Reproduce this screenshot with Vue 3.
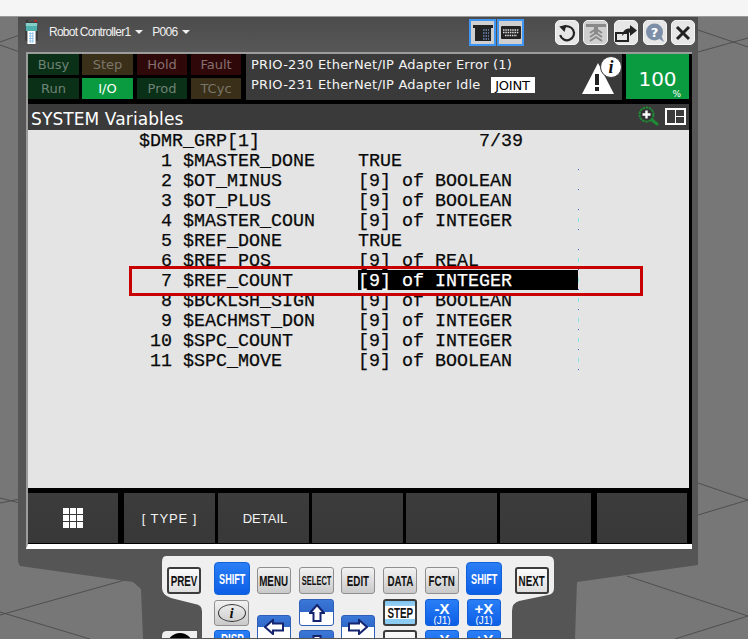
<script setup>
const status = [
  { t: 'Busy', c: 'g' }, { t: 'Step', c: 'y' }, { t: 'Hold', c: 'r' }, { t: 'Fault', c: 'r' },
  { t: 'Run', c: 'g' }, { t: 'I/O', c: 'on' }, { t: 'Prod', c: 'g' }, { t: 'TCyc', c: 'y' },
]
const rows = [
  { n: 1, name: '$MASTER_DONE', v: 'TRUE', dot: 'b' },
  { n: 2, name: '$OT_MINUS', v: '[9] of BOOLEAN', dot: 'b' },
  { n: 3, name: '$OT_PLUS', v: '[9] of BOOLEAN', dot: 'b' },
  { n: 4, name: '$MASTER_COUN', v: '[9] of INTEGER', dot: 'c' },
  { n: 5, name: '$REF_DONE', v: 'TRUE', dot: 'b' },
  { n: 6, name: '$REF_POS', v: '[9] of REAL', dot: 'c' },
  { n: 7, name: '$REF_COUNT', v: '[9] of INTEGER', dot: 'c', sel: true },
  { n: 8, name: '$BCKLSH_SIGN', v: '[9] of BOOLEAN', dot: 'c' },
  { n: 9, name: '$EACHMST_DON', v: '[9] of INTEGER', dot: 'c' },
  { n: 10, name: '$SPC_COUNT', v: '[9] of INTEGER', dot: 'c' },
  { n: 11, name: '$SPC_MOVE', v: '[9] of BOOLEAN', dot: 'c' },
]
const softKeys = ['', '[ TYPE ]', 'DETAIL', '', '', '', '']
const topKeys = [
  { t: 'MENU', c: 'col3' }, { t: 'SELECT', c: 'col4 small' }, { t: 'EDIT', c: 'col5' },
  { t: 'DATA', c: 'col6' }, { t: 'FCTN', c: 'col7' },
]
</script>

<template>
  <div class="page">
    <div class="topband"></div>
    <svg class="scene" width="748" height="639" viewBox="0 0 748 639">
      <g stroke="#4f4f4f" stroke-width="1" fill="none">
        <path d="M0 42L20 35M0 45L20 52M698 30L748 47M698 52L748 38M0 498L20 503M0 503L20 499M698 483L748 500M698 515L748 500M0 615L125 580M0 612L90 639M627 576L748 616M675 639L748 616" />
      </g>
    </svg>

    <div class="shell">
      <header class="head">
        <svg class="handset" width="13" height="25" viewBox="0 0 16 25" preserveAspectRatio="none">
          <circle cx="2.500" cy="2" r="1.600" fill="#3a3a3a" />
          <circle cx="13" cy="2" r="1.600" fill="#c0261c" />
          <rect x="0" y="3" width="16" height="19" rx="2" fill="#3c3c3c" />
          <rect x="1" y="4" width="14" height="8" fill="#4fb0ad" />
          <rect x="1" y="4" width="14" height="3" fill="#86cfc9" />
          <rect x="3" y="12" width="10" height="13" fill="#fff" />
          <path d="M5 14.500h6M5 17h6M5 19.500h6M5 22h6M6.500 13v11M9.500 13v11" stroke="#8fc4ea" stroke-width="1" />
        </svg>
        <span class="crumb first">Robot Controller1</span>
        <i class="caret"></i>
        <span class="crumb">P006</span>
        <i class="caret last"></i>
        <div class="spacer"></div>
        <button class="mode">
          <svg width="20" height="18" viewBox="0 0 20 18">
            <path d="M0 1h20v3h-2v13H2V4H0z" fill="#222" />
            <path d="M10 6h6M10 9h6M10 12h6M10 15h6" stroke="#6d89b5" stroke-width="1.500" stroke-dasharray="1.500 1" />
          </svg>
        </button>
        <button class="mode">
          <svg width="20" height="14" viewBox="0 0 20 14">
            <rect width="20" height="13" rx="1" fill="#222" />
            <path d="M2 4h16M2 6.500h16M4 9.500h12" stroke="#ddd" stroke-width="1.300" stroke-dasharray="1.500 .8" />
          </svg>
        </button>
        <button class="tool t1">
          <svg width="20" height="20" viewBox="0 0 20 20">
            <path d="M6 4.500A7 7 0 1 1 3.200 12" fill="none" stroke="#222" stroke-width="2.200" />
            <path d="M8.500 8.500V1L2 4.500z" fill="#222" transform="rotate(15 6 5)" />
          </svg>
        </button>
        <button class="tool t2">
          <svg width="20" height="22" viewBox="0 0 20 22">
            <path d="M0 2h20v3H0zM8 2h4v9H8z" fill="#8a8a8a" />
            <path d="M4 11l6-4 6 4M4 15l6-4 6 4M4 19l6-4 6 4" fill="none" stroke="#8a8a8a" stroke-width="2" />
          </svg>
        </button>
        <button class="tool t3">
          <svg width="22" height="20" viewBox="0 0 22 20">
            <path d="M1 10h12v8H1z" fill="none" stroke="#222" stroke-width="2" />
            <path d="M7 13C8 7 11 5.500 15 5.500V2l7 5.500-7 5.500V9.500C11 9.500 9 10.500 7 13z" fill="#222" />
          </svg>
        </button>
        <button class="tool t4">
          <svg width="20" height="20" viewBox="0 0 20 20">
            <circle cx="9.500" cy="9" r="8.500" fill="#7d8fa8" />
            <path d="M13 15l6 4-3-7z" fill="#7d8fa8" />
            <text x="9.500" y="14" text-anchor="middle" class="q">?</text>
          </svg>
        </button>
        <button class="tool t5">
          <svg width="18" height="18" viewBox="0 0 18 18">
            <path d="M3 3l12 12M15 3L3 15" stroke="#222" stroke-width="3" />
          </svg>
        </button>
      </header>

      <section class="screen">
        <div class="statusbar">
          <div class="lamps">
            <span v-for="s in status" :key="s.t" class="lamp" :class="s.c">{{ s.t }}</span>
          </div>
          <div class="msg">
            <div class="lines">
              <div>PRIO-230 EtherNet/IP Adapter Error (1)</div>
              <div>PRIO-231 EtherNet/IP Adapter Idle<span class="joint">JOINT</span></div>
            </div>
            <div class="alert">
              <svg width="34" height="31" viewBox="0 0 34 31">
                <path d="M17 0L33 31H1z" fill="#fff" />
                <rect x="14" y="11" width="4" height="11" fill="#222" />
                <rect x="14" y="24" width="4" height="4" fill="#222" />
              </svg>
              <span class="info">i</span>
            </div>
          </div>
          <div class="speed"><span class="num">100</span><span class="pct">%</span></div>
        </div>

        <div class="titlebar">
          <span class="title">SYSTEM Variables</span>
          <svg class="zoomi" width="21" height="20" viewBox="0 0 21 20">
            <circle cx="8.500" cy="8.500" r="7" fill="#333" stroke="#1f8a35" stroke-width="2" stroke-dasharray="2.500 .7" />
            <path d="M8.500 4.500v8M4.500 8.500h8" stroke="#fff" stroke-width="2.400" />
            <path d="M14 14l5 4" stroke="#1f8a35" stroke-width="3" stroke-linecap="round" />
          </svg>
          <span class="split"><i></i><i></i><i></i></span>
        </div>

        <div class="content">
          <div class="heading"><span>$DMR_GRP[1]</span><span class="pos">7/39</span></div>
          <div v-for="r in rows" :key="r.n" class="row">
            <span class="idx">{{ r.n }}</span>
            <span class="name">{{ r.name }}</span>
            <span class="val" :class="{ sel: r.sel }">{{ r.v }}</span>
            <i class="tick" :class="r.dot"></i>
          </div>
          <div class="redbox"></div>
        </div>

        <div class="softkeys">
          <div v-for="(k, i) in softKeys" :key="i" class="soft">
            <span v-if="i === 0" class="dots"><i v-for="d in 9" :key="d"></i></span>
            <span v-else>{{ k }}</span>
          </div>
        </div>
      </section>

      <section class="keypad">
        <button class="key white col1 r1"><span class="sq">PREV</span></button>
        <button class="key blue shift col2"><span class="sq">SHIFT</span></button>
        <button v-for="k in topKeys" :key="k.t" class="key gray r1" :class="k.c"><span class="sq">{{ k.t }}</span></button>
        <button class="key blue shift col8 shiftr"><span class="sq">SHIFT</span></button>
        <button class="key white col9 r1"><span class="sq">NEXT</span></button>

        <button class="key gray col2 r2 infokey"><span class="ring">i</span></button>
        <button class="key arrow col4 r2">
          <svg width="16" height="18" viewBox="0 0 16 18"><path d="M8 1l7 8h-3.500v8h-7V9H1z" fill="#fff" stroke="#14246e" stroke-width="2" /></svg>
        </button>
        <button class="key step col6 r2"><span class="sq">STEP</span></button>
        <button class="key blue jog col7 r2"><b>-X</b><small>(J1)</small></button>
        <button class="key blue jog col8 r2"><b>+X</b><small>(J1)</small></button>

        <button class="key arrow side col3 r3">
          <svg width="20" height="16" viewBox="0 0 20 16"><path d="M1 8l8-7v3.500h10v7H9V15z" fill="#fff" stroke="#14246e" stroke-width="2" /></svg>
        </button>
        <button class="key arrow side col5 r3">
          <svg width="20" height="16" viewBox="0 0 20 16"><path d="M19 8l-8-7v3.500H1v7h10V15z" fill="#fff" stroke="#14246e" stroke-width="2" /></svg>
        </button>

        <div class="estop"></div>
        <button class="key blue col2 r4 disp"><span class="sq">DISP</span></button>
        <button class="key arrow col4 r4">
          <svg width="16" height="18" viewBox="0 0 16 18"><path d="M8 17l7-8h-3.500V1h-7v8H1z" fill="#fff" stroke="#14246e" stroke-width="2" /></svg>
        </button>
        <button class="key white col6 r4"></button>
        <button class="key blue jog col7 r4"><b>-Y</b><small>(J2)</small></button>
        <button class="key blue jog col8 r4"><b>+Y</b><small>(J2)</small></button>
      </section>
    </div>
  </div>
</template>

<style scoped>
.page {
  position: relative;
  width: 748px;
  height: 639px;
  overflow: hidden;
  background: #777;
  font-family: "DejaVu Sans", sans-serif;
}
.topband {
  height: 16px;
  background: #f5f5f5;
  border-bottom: 1px solid #9a9a9a;
}
.scene {
  position: absolute;
  left: 0;
  top: 0;
}
.shell {
  position: relative;
  width: 680px;
  height: 622px;
  margin-left: 18px;
  background: linear-gradient(#4c4c4c, #575757 35px, #555);
  clip-path: polygon(0 0, 680px 0, 680px 548px, 559px 565px, 557px 622px, 125px 622px, 123px 572px, 115px 565px, 2px 549px, 0 545px);
}
.head {
  height: 35px;
  display: flex;
  align-items: flex-start;
  padding-left: 7px;
}
.handset { margin-top: 2px; }
.crumb {
  font: 12px/14px "Liberation Sans", sans-serif;
  color: #f0f0f0;
  margin-top: 8px;
  letter-spacing: -.75px;
}
.crumb.first { margin-left: 11px; }
.caret {
  width: 0;
  height: 0;
  margin: 13px 9px 0 5px;
  border-left: 4px solid transparent;
  border-right: 4px solid transparent;
  border-top: 4px solid #f0f0f0;
}
.caret.last { margin-left: 5px; }
.spacer { flex: 1; }
.mode, .tool {
  padding: 0;
  display: flex;
  align-items: center;
  justify-content: center;
  cursor: default;
}
.mode {
  width: 27px;
  height: 27px;
  margin-top: 2px;
  border: 2px solid #3e97f5;
  background: #cfcfcf;
}
.mode + .mode { margin-left: 1px; }
.tool {
  height: 25px;
  width: 24px;
  margin-top: 3px;
  border: 1px solid #f5f5f5;
  border-radius: 5px;
  background: #e6e6e6;
}
.t1 { margin-left: 31px; }
.t2 { margin-left: 4px; width: 25px; background: #cfcfcf; }
.t3 { margin-left: 6px; }
.t4 { margin-left: 5px; }
.t5 { margin-left: 4px; margin-right: 3px; }
.q { font: bold 13px "DejaVu Sans", sans-serif; fill: #fff; }

.screen {
  width: 666px;
  height: 497px;
  margin-left: 8px;
  box-sizing: border-box;
  border-top: 2px solid #9c9c9c;
  border-left: 2px solid #9c9c9c;
  border-bottom: 5px solid #fff;
  background: #000;
  display: flex;
  flex-direction: column;
}
.statusbar {
  height: 46px;
  display: flex;
  gap: 4px;
  flex: none;
}
.lamps {
  width: 214px;
  display: grid;
  grid-template-columns: 51px 51px 51px 51px;
  grid-template-rows: 21px 21px;
  column-gap: 3px;
  row-gap: 3px;
}
.lamp {
  font-size: 13px;
  line-height: 21px;
  text-align: center;
}
.lamp:nth-child(4n+3), .lamp:nth-child(4n) { margin-left: 1px; }
.lamp.g { background: #0a3018; color: #6f8375; }
.lamp.y { background: #3a2f18; color: #7b766a; }
.lamp.r { background: #2f0909; color: #87706f; }
.lamp.on { background: #0a9b41; color: #fff; }
.msg {
  width: 376px;
  background: #3a3a3a;
  display: flex;
  position: relative;
}
.lines {
  padding: 1px 0 0 5px;
  color: #f4f4f4;
  font-size: 13px;
  line-height: 20px;
  white-space: nowrap;
  letter-spacing: .22px;
}
.joint {
  display: inline-block;
  width: 44px;
  height: 16px;
  margin-left: 10px;
  background: #fff;
  color: #000;
  line-height: 17px;
  text-align: center;
  letter-spacing: -.2px;
  vertical-align: -1px;
}
.alert {
  position: absolute;
  right: 0;
  top: 0;
  width: 42px;
  height: 46px;
}
.alert svg {
  position: absolute;
  left: 1px;
  top: 9px;
}
.info {
  position: absolute;
  left: 20px;
  top: 2px;
  width: 22px;
  height: 22px;
  border-radius: 50%;
  background: #fff;
  border: 1px solid #3a3a3a;
  box-sizing: border-box;
  color: #111;
  font: italic bold 18px/20px "Liberation Serif", serif;
  text-align: center;
}
.speed {
  width: 63px;
  height: 45px;
  background: #0a9b41;
  color: #fff;
  position: relative;
  text-align: center;
}
.num {
  display: block;
  font-size: 20px;
  line-height: 24px;
  margin-top: 13px;
}
.pct {
  position: absolute;
  right: 8px;
  bottom: -1px;
  font-size: 9px;
  line-height: 11px;
}

.titlebar {
  margin-top: 4px;
  width: 661px;
  height: 26px;
  flex: none;
  background: #3a3a3a;
  display: flex;
  align-items: center;
  color: #fff;
  padding-left: 3px;
  box-sizing: border-box;
}
.title {
  flex: 1;
  font-size: 17px;
  letter-spacing: .1px;
  margin-top: 3px;
}
.zoomi { margin: -2px 6px 0 0; }
.split {
  width: 17px;
  height: 13px;
  margin: -2px 3px 0 0;
  background: #fff;
  border: 1px solid #fff;
  display: grid;
  grid-template-columns: 8px 8px;
  grid-template-rows: 6px 6px;
  gap: 1px;
  padding: 1px;
}
.split i { background: #3a3a3a; }
.split i:first-child { grid-row: span 2; }

.content {
  position: relative;
  width: 661px;
  height: 358px;
  flex: none;
  background: #e4e4e4;
  color: #0a0a0a;
  font: 18.33px/24px "Liberation Mono", monospace;
  -webkit-text-stroke: .25px #0a0a0a;
  white-space: pre;
}
.heading {
  height: 20px;
  padding-left: 111px;
  display: flex;
}
.pos { margin-left: 219px; }
.row {
  height: 20px;
  display: flex;
  padding-left: 111px;
}
.idx { width: 33px; text-align: right; }
.name { width: 175px; margin-left: 11px; }
.val { width: 220px; height: 20px; }
.val.sel { background: #000; color: #fff; -webkit-text-stroke: .25px #fff; }
.tick {
  width: 1px;
  height: 20px;
  background: linear-gradient(transparent 19px, #3a66d8 19px);
}
.tick.c {
  background: linear-gradient(transparent 8px, #7de8e4 8px, #7de8e4 12px, transparent 12px, transparent 19px, #3a66d8 19px);
}
.redbox {
  position: absolute;
  left: 101px;
  top: 136px;
  width: 514px;
  height: 30px;
  box-sizing: border-box;
  border: 3px solid #c80000;
}

.softkeys {
  flex: none;
  padding-top: 5px;
  height: 52px;
  box-sizing: content-box;
  display: grid;
  grid-template-columns: 90px 94px 91px 91px 91px 91px 93px;
  grid-template-rows: 50px;
  column-gap: 3px;
}
.soft {
  background: linear-gradient(#3c3c3c, #383838);
  display: flex;
  align-items: center;
  justify-content: center;
  color: #f2f2f2;
  font: 13px "Liberation Sans", sans-serif;
}
.soft:nth-child(2) { margin-left: 3px; letter-spacing: .9px; }
.soft:nth-child(3) { padding-left: 3px; }
.soft:last-child { margin-left: 3px; }
.dots {
  display: grid;
  grid-template-columns: repeat(3, 6px);
  gap: 1px;
}
.dots i { height: 6px; background: #fff; }

.keypad {
  width: 393px;
  height: 82px;
  margin: 7px 0 0 143px;
  box-sizing: border-box;
  padding: 6px 0 0 6px;
  background: #efefef;
  clip-path: path("M5 0H387Q393 0 393 6V32Q393 38 387 39L358 45Q351 47 351 55V82H41V55Q41 49 34 48L10 42Q1 39 1 32V6Q1 0 5 0ZM6 75H36V82H1V80Q1 75 6 75Z");
  display: grid;
  grid-template-columns: 47px 43px 42px 42px 42px 42px 42px 48px 34px;
  grid-template-rows: 37px 16px 15px 27px;
}
.key {
  width: 34px;
  height: 27px;
  padding: 0;
  box-sizing: border-box;
  border-radius: 3px;
  display: flex;
  align-items: center;
  justify-content: center;
  flex-direction: column;
  font: bold 14px "Liberation Sans", sans-serif;
  color: #111;
  overflow: hidden;
  cursor: default;
}
.col1 { grid-column: 1; }
.col2 { grid-column: 2; width: 36px; }
.col3 { grid-column: 3; }
.col4 { grid-column: 4; width: 35px; }
.col5 { grid-column: 5; }
.col6 { grid-column: 6; }
.col7 { grid-column: 7; }
.col8 { grid-column: 8; }
.col9 { grid-column: 9; }
.r1 { grid-row: 1; margin-top: 5px; }
.r2 { grid-row: 2 / span 2; }
.r3 { grid-row: 3 / span 2; }
.r4 { grid-row: 4; }
.sq { display: inline-block; transform: scaleX(.7); white-space: nowrap; }
.small .sq { transform: scaleX(.6); font-size: 12.5px; }
.gray {
  border: 1px solid #8f8f8f;
  background: linear-gradient(#f2f2f2, #c9c9c9);
}
.white {
  border: 2px solid #3c3c3c;
  background: linear-gradient(#fbfbfb, #dedede);
}
.blue {
  border: 1px solid #1160d8;
  background: linear-gradient(#2a7ef5, #0c5fe6);
  color: #fff;
}
.shift {
  grid-row: 1;
  height: 33px;
  border-radius: 4px;
}
.shift .sq { transform: scaleX(.65); }
.shiftr { margin-left: -1px; width: 36px; }
.jog {
  justify-content: flex-start;
  padding-top: 2px;
}
.jog b { font-size: 15px; line-height: 14px; }
.jog small { font: 10px/10px "Liberation Sans", sans-serif; }
.disp { justify-content: flex-start; }
.ring {
  width: 28px;
  height: 18px;
  border: 1px solid #333;
  border-radius: 50%;
  box-sizing: border-box;
  font: italic bold 15px/16px "Liberation Serif", serif;
  text-align: center;
}
.infokey { width: 35px; margin-top: 1px; height: 26px; }
.arrow {
  border: 1px solid #2f5fb8;
  background: linear-gradient(#3b78d8, #2f68c8 50%, #fff 50%);
}
.arrow.side {
  height: 35px;
  justify-content: flex-start;
  padding-top: 3px;
  background: linear-gradient(#3b78d8, #2f68c8 11px, #fff 11px);
}
.step {
  border: 2px solid #3c3c3c;
  background: linear-gradient(#7cc4f2 0, #9bd2f4 22%, #fff 22%, #fff 78%, #8dccf3 78%);
}
.estop {
  grid-column: 1;
  grid-row: 4;
  width: 26px;
  height: 26px;
  margin-top: 3px;
  border-radius: 50%;
  background: #000;
}
</style>

<style>
html, body { margin: 0; overflow: hidden; }
</style>
